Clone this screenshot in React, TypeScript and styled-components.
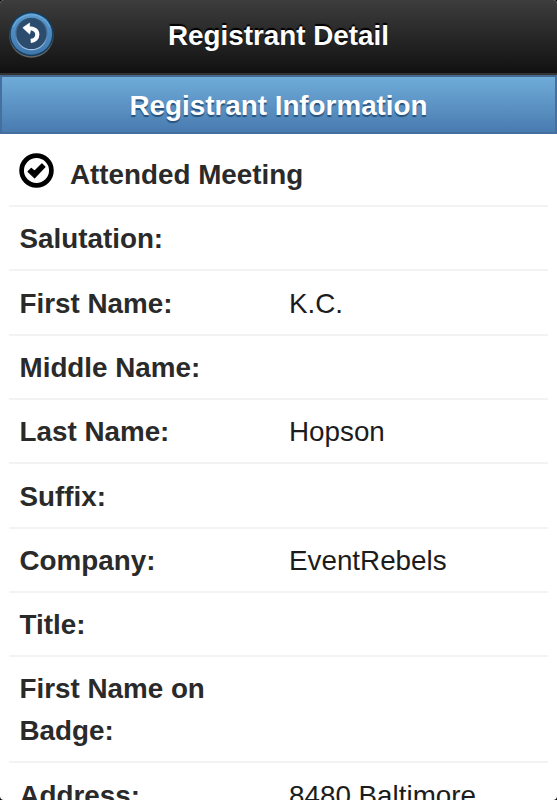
import React from "react";
import styled, { createGlobalStyle } from "styled-components";

const GlobalStyle = createGlobalStyle`
  html, body {
    margin: 0;
    background: #000;
  }
  * {
    box-sizing: border-box;
  }
`;

const Screen = styled.div`
  display: flex;
  flex-direction: column;
  width: 557px;
  height: 800px;
  overflow: hidden;
  border-radius: 4px;
  background: #fff;
  color: #2a2a2a;
  font-family: "Liberation Sans", Arial, Helvetica, sans-serif;
  font-size: 27.8px;
  line-height: 41.8px;
`;

const Header = styled.header`
  display: grid;
  grid-template-columns: 64px 1fr 64px;
  align-items: center;
  flex: none;
  height: 75px;
  padding-bottom: 2px;
  border-bottom: 2px solid #333;
  background: linear-gradient(#3d3d3d, #111);
`;

const BackButton = styled.button`
  display: block;
  width: 48px;
  height: 48px;
  margin: 0 0 2px 8px;
  padding: 0;
  border: 0;
  background: transparent;
`;

const PageTitle = styled.h1`
  margin: 0;
  color: #fff;
  font-size: inherit;
  text-align: center;
  text-shadow: 0 -2px 1px #000;
`;

const SectionTitle = styled.h2`
  flex: none;
  height: 59px;
  margin: 0;
  padding-top: 8px;
  border: 2px solid #456f9f;
  border-top-color: #44678e;
  background: linear-gradient(#6facd9, #497bb0);
  background-clip: padding-box;
  color: #fff;
  font-size: inherit;
  text-align: center;
  text-shadow: 0 2px 1px #26517c;
`;

const Fields = styled.div`
  flex: none;
  margin: 0 9px;
`;

const Attended = styled.div`
  display: flex;
  height: 73px;
  padding: 19px 0 0 10px;
  border-bottom: 2px solid #f3f3f3;
  font-weight: bold;
  svg {
    flex: none;
    margin-right: 16px;
  }
  span {
    padding-top: 1px;
  }
`;

const FieldRow = styled.div`
  display: grid;
  grid-template-columns: 269.5px 1fr;
  padding: 11.2px 0 9.35px 10.5px;
  border-bottom: 2px solid #f3f3f3;
`;

const Label = styled.div`
  padding-right: 40px;
  font-weight: bold;
`;

const Value = styled.div`
  color: #1c1c1c;
`;

const BackIcon = () => (
  <svg width="48" height="48" viewBox="0 0 48 48">
    <defs>
      <linearGradient id="ring" x1="0" y1="0" x2="0" y2="1">
        <stop offset="0" stopColor="#5b9bcf" />
        <stop offset="1" stopColor="#4076ac" />
      </linearGradient>
      <linearGradient id="rim" x1="0" y1="0" x2="0" y2="1">
        <stop offset="0" stopColor="#2c506f" />
        <stop offset="0.6" stopColor="#5584b0" />
        <stop offset="1" stopColor="#a4c9e8" />
      </linearGradient>
    </defs>
    <circle cx="23.4" cy="24.6" r="22.2" fill="#666" />
    <circle cx="23.4" cy="23" r="22.2" fill="#123f61" />
    <circle cx="23.4" cy="23" r="20.7" fill="url(#ring)" />
    <path d="M5 16a20 20 0 0 1 37 0" fill="none" stroke="#72afdc" strokeWidth="1" />
    <circle cx="23.4" cy="23" r="15.7" fill="#2b4c6c" stroke="url(#rim)" strokeWidth="1.3" />
    <path d="M20 17.3c5.8-.3 9.3 2 9.3 6.2 0 3.7-2.6 6.2-6.6 6.4" fill="none" stroke="#fff" strokeWidth="4.2" />
    <path d="M14.8 16.7L21.6 12v3.5l1 4-1 3.6z" fill="#fff" stroke="#fff" strokeWidth=".6" strokeLinejoin="round" />
  </svg>
);

const CheckIcon = () => (
  <svg width="35" height="35" viewBox="0 0 35 35">
    <circle cx="17.5" cy="17.5" r="14.9" fill="none" stroke="#000" strokeWidth="4.7" />
    <path d="M9 18.6l3.3-3.3 3.3 2.8 7.3-7.3 3.1 3.1-10.4 10.9z" fill="#000" stroke="#000" strokeWidth="1.1" strokeLinejoin="round" />
  </svg>
);

const fields = [
  { label: "Salutation:", value: "" },
  { label: "First Name:", value: "K.C." },
  { label: "Middle Name:", value: "" },
  { label: "Last Name:", value: "Hopson" },
  { label: "Suffix:", value: "" },
  { label: "Company:", value: "EventRebels" },
  { label: "Title:", value: "" },
  { label: "First Name on Badge:", value: "" },
  { label: "Address:", value: "8480 Baltimore" },
];

const App = () => (
  <>
    <GlobalStyle />
    <Screen>
      <Header>
        <BackButton aria-label="Back">
          <BackIcon />
        </BackButton>
        <PageTitle>Registrant Detail</PageTitle>
      </Header>
      <SectionTitle>Registrant Information</SectionTitle>
      <Fields>
        <Attended>
          <CheckIcon />
          <span>Attended Meeting</span>
        </Attended>
        {fields.map(f => (
          <FieldRow key={f.label}>
            <Label>{f.label}</Label>
            <Value>{f.value}</Value>
          </FieldRow>
        ))}
      </Fields>
    </Screen>
  </>
);

export default App;
